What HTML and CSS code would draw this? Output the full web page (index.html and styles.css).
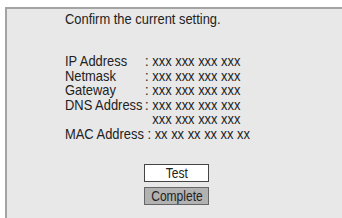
FILE: index.html
```html
<!DOCTYPE html>
<html>
<head>
<meta charset="utf-8">
<link rel="stylesheet" href="styles.css">
</head>
<body>
<div class="panel">
  <div class="title">Confirm the current setting.</div>
  <div class="info">
    <div class="row"><span class="lbl">IP Address</span><span class="val">: xxx xxx xxx xxx</span></div>
    <div class="row"><span class="lbl">Netmask</span><span class="val">: xxx xxx xxx xxx</span></div>
    <div class="row"><span class="lbl">Gateway</span><span class="val">: xxx xxx xxx xxx</span></div>
    <div class="row"><span class="lbl">DNS Address</span><span class="val">: xxx xxx xxx xxx</span></div>
    <div class="row"><span class="lbl"></span><span class="val"><span class="hide">:</span> xxx xxx xxx xxx</span></div>
    <div class="row"><span class="lbl lbl-auto">MAC Address</span><span class="val">&nbsp;: xx xx xx xx xx xx</span></div>
  </div>
  <div class="buttons">
    <div class="btn btn-test"><span class="btn-text">Test</span></div>
    <div class="btn btn-complete"><span class="btn-text">Complete</span></div>
  </div>
</div>
</body>
</html>
```
FILE: styles.css
```css
html, body {
  margin: 0;
  padding: 0;
  background: #ffffff;
}
body {
  width: 342px;
  height: 218px;
  overflow: hidden;
  font-family: "Liberation Sans", Arial, sans-serif;
  color: #222222;
}
.panel {
  margin: 7px 0 0 5px;
  height: 207px;
  background: #e8e8e8;
  border-top: 2px solid #a4a4a4;
  border-left: 2px solid #a4a4a4;
  border-bottom: 2px solid #6e6e6e;
  padding: 2px 0 0 58px;
  box-sizing: content-box;
  font-size: 15px;
}
.title {
  line-height: 15px;
  height: 15px;
  white-space: nowrap;
  transform: scaleX(0.86);
  transform-origin: 0 0;
}
.info {
  margin-top: 28px;
}
.row {
  display: flex;
  font-size: 14.5px;
  line-height: 14.6px;
  height: 14.6px;
  white-space: nowrap;
  transform: scaleX(0.89);
  transform-origin: 0 0;
}
.lbl {
  width: 90px;
  flex: none;
}
.lbl-auto {
  width: auto;
}
.val {
  white-space: pre;
}
.hide {
  visibility: hidden;
}
.buttons {
  margin-top: 22px;
  margin-left: 79px;
  display: flex;
  flex-direction: column;
  gap: 5px;
  width: 65px;
}
.btn {
  height: 16px;
  line-height: 16px;
  text-align: center;
  font-size: 14px;
  border: 1px solid #444;
  overflow: hidden;
}
.btn-text {
  display: inline-block;
  transform: scaleX(0.86);
}
.btn-test {
  background: #ffffff;
}
.btn-complete {
  background: #b2b2b2;
  border-color: #666666;
}
```
